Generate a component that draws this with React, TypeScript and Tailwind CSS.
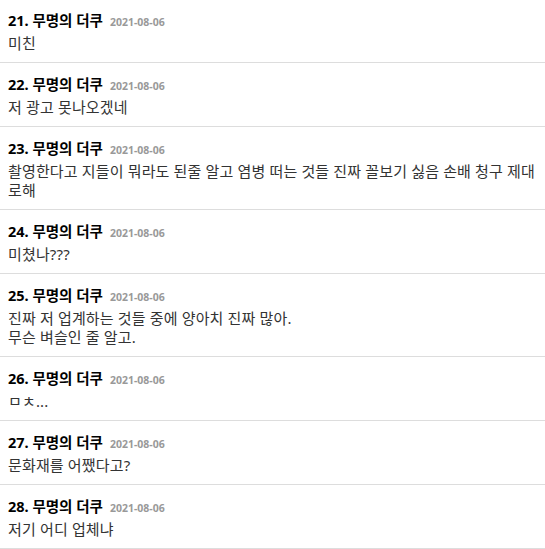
const comments = [
  { no: 21, body: ['미친'] },
  { no: 22, body: ['저 광고 못나오겠네'] },
  { no: 23, body: ['촬영한다고 지들이 뭐라도 된줄 알고 염병 떠는 것들 진짜 꼴보기 싫음 손배 청구 제대로해'] },
  { no: 24, body: ['미쳤나???'] },
  { no: 25, body: ['진짜 저 업계하는 것들 중에 양아치 진짜 많아.', '무슨 벼슬인 줄 알고.'] },
  { no: 26, body: ['ㅁㅊ...'] },
  { no: 27, body: ['문화재를 어쨌다고?'] },
  { no: 28, body: ['저기 어디 업체냐'] },
];

export default function App() {
  return (
    <div
      className="w-[545px] h-[549px] overflow-hidden bg-white"
      style={{ fontFamily: '"Noto Sans", "Noto Sans CJK KR", sans-serif' }}
    >
      <ul className="-mt-[1px]">
        {comments.map((c) => (
          <li key={c.no} className="border-b border-[#dddddd] px-2 pt-[11px] pb-[9px]">
            <div className="flex items-baseline gap-[7px] h-5 leading-5">
              <span className="text-[14.5px] font-bold text-black">{c.no}. 무명의 더쿠</span>
              <span className="text-[10.5px] font-bold text-[#999999]">2021-08-06</span>
            </div>
            <p className="mt-1 text-[15px] tracking-[0.15px] leading-[19px] text-[#333333]">
              {c.body.map((line, i) => (
                <span key={i} className="block">{line}</span>
              ))}
            </p>
          </li>
        ))}
      </ul>
    </div>
  );
}
